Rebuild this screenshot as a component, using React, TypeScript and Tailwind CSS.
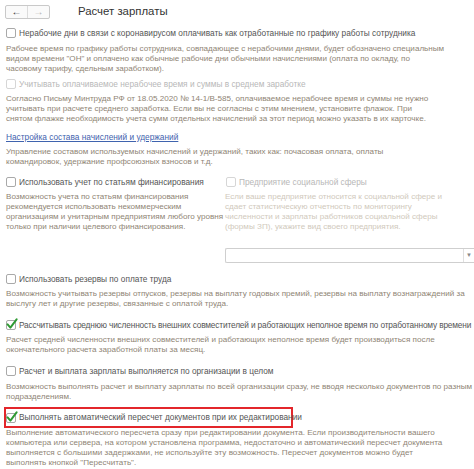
import React from "react";

const FONT = { fontFamily: '"Liberation Sans", Arial, sans-serif' };

function Box({ checked = false, disabled = false }: { checked?: boolean; disabled?: boolean }) {
  return (
    <span className="relative inline-block shrink-0 w-[10px] h-[10px]">
      <span
        className={
          "absolute inset-0 rounded-[2px] border bg-white " +
          (disabled ? "border-[#d6d6d6]" : "border-[#a9a9a9]")
        }
      />
      {checked && (
        <svg className="absolute left-[0px] top-[-2px]" width="12" height="12" viewBox="0 0 12 12">
          <path d="M1.6 6.4 L4.4 9.6 L10.6 1.4" fill="none" stroke="#2f9a33" strokeWidth="2" strokeLinecap="round" strokeLinejoin="round" />
        </svg>
      )}
    </span>
  );
}

function Check({
  label,
  checked,
  disabled,
  tight,
}: {
  label: string;
  checked?: boolean;
  disabled?: boolean;
  tight?: boolean;
}) {
  return (
    <div className={"flex items-center h-[12px] gap-[3px] whitespace-nowrap text-[8.3px] " + (tight ? "tracking-[-0.16px]" : "")}>
      <Box checked={checked} disabled={disabled} />
      <span className={disabled ? "text-[#b8b8b8]" : "text-[#555555]"}>{label}</span>
    </div>
  );
}

function Desc({ lines, className = "", muted }: { lines: string[]; className?: string; muted?: boolean }) {
  return (
    <div className={(muted ? "text-[#d0c9bc] " : "text-[#8f8575] ") + "leading-[10px] " + className}>
      {lines.map((l, i) => (
        <div key={i} className="h-[10px] whitespace-nowrap">{l}</div>
      ))}
    </div>
  );
}

export default function App() {
  return (
    <div className="w-[474px] h-[469px] overflow-hidden bg-white text-[8.1px]" style={FONT}>
      {/* шапка */}
      <div className="flex items-center h-[24px] px-[5px]">
        <div className="flex h-[14px] w-[45px] rounded-[2px] border border-[#c9c9c9] bg-[#fafafa]">
          <div className="flex-1 flex items-center justify-center border-r border-[#dcdcdc] text-[#333] font-bold text-[10px] leading-none">←</div>
          <div className="flex-1 flex items-center justify-center text-[#b0b0b0] text-[10px] leading-none">→</div>
        </div>
        <div className="ml-[28px] text-[11.4px] text-[#333]">Расчет зарплаты</div>
      </div>

      <div className="px-[6px]">
        <div className="mt-[3px]">
          <Check label="Нерабочие дни в связи с коронавирусом оплачивать как отработанные по графику работы сотрудника" />
        </div>
        <Desc
          className="mt-[5px]"
          lines={[
            "Рабочее время по графику работы сотрудника, совпадающее с нерабочими днями, будет обозначено специальным",
            "видом времени \"ОН\" и оплачено как обычные рабочие дни обычными начислениями (оплата по окладу, по",
            "часовому тарифу, сдельным заработком).",
          ]}
        />
        <div className="mt-[4px]">
          <Check disabled label="Учитывать оплачиваемое нерабочее время и суммы в среднем заработке" />
        </div>
        <Desc
          className="mt-[4px]"
          lines={[
            "Согласно Письму Минтруда РФ от 18.05.2020 № 14-1/В-585, оплачиваемое нерабочее время и суммы не нужно",
            "учитывать при расчете среднего заработка. Если вы не согласны с этим мнением, установите флажок. При",
            "снятом флажке необходимость учета сумм отдельных начислений за этот период можно указать в их карточке.",
          ]}
        />
        <div className="mt-[8px] h-[10px] leading-[10px] text-[8.3px]">
          <span className="text-[#3f63ae] underline underline-offset-[1px]">Настройка состава начислений и удержаний</span>
        </div>
        <Desc
          className="mt-[5px]"
          lines={[
            "Управление составом используемых начислений и удержаний, таких как: почасовая оплата, оплаты",
            "командировок, удержание профсоюзных взносов и т.д.",
          ]}
        />

        <div className="mt-[9px] flex">
          <div className="w-[219px] shrink-0">
            <Check label="Использовать учет по статьям финансирования" />
            <Desc
              className="mt-[4px]"
              lines={[
                "Возможность учета по статьям финансирования",
                "рекомендуется использовать некоммерческим",
                "организациям и унитарным предприятиям любого уровня",
                "только при наличии целевого финансирования.",
              ]}
            />
          </div>
          <div className="flex-1">
            <div className="pl-[1px]">
              <Check disabled label="Предприятие социальной сферы" />
            </div>
            <Desc
              muted
              className="mt-[4px]"
              lines={[
                "Если ваше предприятие относится к социальной сфере и",
                "сдает статистическую отчетность по мониторингу",
                "численности и зарплаты работников социальной сферы",
                "(формы ЗП), укажите вид своего предприятия.",
              ]}
            />
          </div>
        </div>

        <div className="mt-[16px] ml-[219px] mr-[-6px] flex h-[15px] rounded-l-[2px] border border-r-0 border-[#cfcfcf] bg-white">
          <div className="flex-1" />
          <div className="w-[11px] flex items-center justify-center border-l border-[#e0e0e0] text-[6px] text-[#888]">▼</div>
        </div>

        <div className="mt-[10px]">
          <Check label="Использовать резервы по оплате труда" />
        </div>
        <Desc
          className="mt-[4px]"
          lines={[
            "Возможность учитывать резервы отпусков,  резервы на выплату годовых премий, резервы на выплату вознаграждений за",
            "выслугу лет и другие резервы, связанные с оплатой труда.",
          ]}
        />

        <div className="mt-[10px]">
          <Check
            checked
            tight
            label="Рассчитывать среднюю численность внешних совместителей и работающих неполное время по отработанному времени"
          />
        </div>
        <Desc
          className="mt-[4px]"
          lines={[
            "Расчет средней численности внешних совместителей и работающих неполное время будет производиться после",
            "окончательного расчета заработной платы за месяц.",
          ]}
        />

        <div className="mt-[10px]">
          <Check label="Расчет и выплата зарплаты выполняется по организации в целом" />
        </div>
        <Desc
          className="mt-[5px]"
          lines={[
            "Возможность выполнять расчет и выплату зарплаты по всей организации сразу, не вводя несколько документов по разным",
            "подразделениям.",
          ]}
        />

        <div className="mt-[5px] ml-[-2px] w-[289px] h-[21px] flex items-center border-2 border-[#e3262b]">
          <Check checked label="Выполнять автоматический пересчет документов при их редактировании" />
        </div>
        <Desc
          lines={[
            "Выполнение автоматического пересчета сразу при редактировании документа. Если производительности вашего",
            "компьютера или сервера, на котором установлена программа, недостаточно и автоматический пересчет документа",
            "выполняется с большими задержками, не используйте эту возможность. Пересчет документов можно будет",
            "выполнять кнопкой \"Пересчитать\".",
          ]}
        />
      </div>
    </div>
  );
}
